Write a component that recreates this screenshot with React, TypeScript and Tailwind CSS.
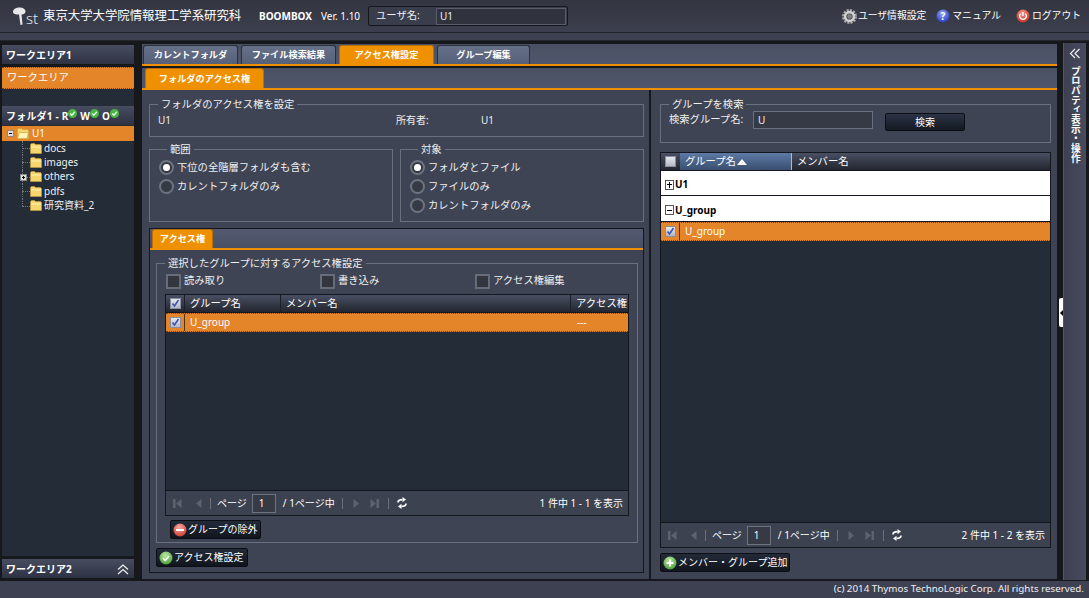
import React from "react";

function Orb({ from, to, children }: { from: string; to: string; children?: React.ReactNode }) {
	const id = from.slice(1) + to.slice(1);
	return (
		<svg width="14" height="14" viewBox="0 0 14 14" className="shrink-0">
			<defs>
				<radialGradient id={id} cx="45%" cy="30%" r="75%">
					<stop offset="0%" stopColor={from} />
					<stop offset="100%" stopColor={to} />
				</radialGradient>
			</defs>
			<circle cx="7" cy="7" r="6.5" fill={`url(#${id})`} />
			{children}
		</svg>
	);
}

function Gear() {
	return (
		<svg width="15" height="15" viewBox="0 0 15 15" className="shrink-0">
			<circle cx="7.5" cy="7.5" r="6" fill="none" stroke="#a8a8a8" strokeWidth="3" strokeDasharray="2 1.1" />
			<circle cx="7.5" cy="7.5" r="4.4" fill="none" stroke="#d0d0d0" strokeWidth="2.6" />
			<circle cx="7.5" cy="7.5" r="2.4" fill="#808080" />
		</svg>
	);
}

function MiniCheck() {
	return (
		<svg width="9" height="9" viewBox="0 0 9 9" className="inline-block align-[2px]">
			<circle cx="4.5" cy="4.5" r="4.5" fill="#4bb543" />
			<path d="M2.2 4.5l1.7 1.7 3-3.4" fill="none" stroke="#e8ffe8" strokeWidth="1.3" />
		</svg>
	);
}

function Folder({ open = false }: { open?: boolean }) {
	return (
		<svg width="12" height="11" viewBox="0 0 12 11" className="shrink-0">
			<path d="M0.5 2.5V1.5L1.5 0.5H4.5L5.5 1.5H10.5L11.5 2.5V10.5H0.5Z" fill="#f5d56e" stroke="#c9a03a" strokeWidth="0.6" />
			{open ? <path d="M0.5 10.5L2.5 4.5H11.5L10 10.5Z" fill="#fff3b8" stroke="#c9a03a" strokeWidth="0.6" /> : <path d="M1 3.5H11V4.5H1Z" fill="#fff3b8" />}
		</svg>
	);
}

function Expander({ minus = false, light = false }: { minus?: boolean; light?: boolean }) {
	return (
		<span
			className={`shrink-0 flex items-center justify-center relative border ${
				light ? "w-[9px] h-[10px] border-[#555] bg-white" : "w-[7px] h-[7px] border-[#888] bg-[#ddd]"
			}`}
		>
			<span className={`${light ? "w-[5px]" : "w-[3px]"} h-px bg-black`} />
			{minus ? null : <span className={`absolute w-px ${light ? "h-[6px]" : "h-[3px]"} bg-black`} />}
		</span>
	);
}

function Radio({ on = false, label }: { on?: boolean; label: string }) {
	return (
		<div className="flex items-center h-[19px]">
			<span className="w-[15px] h-[15px] rounded-full border-2 border-[#6e7480] bg-[#363a45] flex items-center justify-center shrink-0">
				{on ? <span className="w-[7px] h-[7px] rounded-full bg-white" /> : null}
			</span>
			<span className="ml-[3px] text-[10.3px] text-[#f0f0f0]">{label}</span>
		</div>
	);
}

function EmptyBox({ label, width }: { label: string; width: string }) {
	return (
		<div className={`flex items-center ${width}`}>
			<span className="w-[15px] h-[15px] border-2 border-[#666c78] bg-[#33363f] shrink-0" />
			<span className="ml-[3px] text-[10.3px] text-[#f0f0f0]">{label}</span>
		</div>
	);
}

function SmallCheck({ checked = true }: { checked?: boolean }) {
	return (
		<span className="w-[11px] h-[11px] bg-gradient-to-b from-[#e8e8ee] to-[#b4b8c4] border border-[#8a8fa0] flex items-center justify-center shrink-0">
			{checked ? (
				<svg width="9" height="9" viewBox="0 0 9 9">
					<path d="M1.5 4.5L3.5 7L7.5 1" fill="none" stroke="#3f52b5" strokeWidth="1.6" />
				</svg>
			) : null}
		</span>
	);
}

function Fieldset({ title, className, children }: { title: string; className: string; children?: React.ReactNode }) {
	return (
		<fieldset className={`border border-[#697080] ${className}`}>
			<legend className="ml-[8px] px-[3px] text-[10.3px] leading-[14px] text-[#f0f0f0]">{title}</legend>
			{children}
		</fieldset>
	);
}

function Tab({ label, active = false, width = "w-[95px]" }: { label: string; active?: boolean; width?: string }) {
	return (
		<div
			className={`h-[19px] ${width} rounded-t-[3px] border border-b-0 flex items-center justify-center text-[9.2px] font-bold text-white whitespace-nowrap ${
				active ? "bg-[#ee9000] border-[#b87008]" : "bg-gradient-to-b from-[#667088] to-[#566078] border-[#2b2f3a]"
			}`}
		>
			{label}
		</div>
	);
}

function PagerBtn({ flip = false, bar = false }: { flip?: boolean; bar?: boolean }) {
	return (
		<svg width="11" height="11" viewBox="0 0 11 11" className={`shrink-0 ${flip ? "-scale-x-100" : ""}`}>
			{bar ? <rect x="1" y="1" width="2.5" height="9" fill="#5c626e" /> : null}
			<path d="M9.5 1V10L4 5.5Z" fill="#5c626e" />
		</svg>
	);
}

function SyncIcon() {
	return (
		<svg width="10" height="12" viewBox="0 0 10 12" className="shrink-0">
			<path d="M1 5.5C1 3.4 2.6 2.6 5.5 2.6" fill="none" stroke="#fff" strokeWidth="1.7" />
			<path d="M5.5 0L9 2.6L5.5 5.2Z" fill="#fff" />
			<path d="M9 6.5C9 8.6 7.4 9.4 4.5 9.4" fill="none" stroke="#fff" strokeWidth="1.7" />
			<path d="M4.5 12L1 9.4L4.5 6.8Z" fill="#fff" />
		</svg>
	);
}

function Pager({ summary }: { summary: string }) {
	return (
		<div className="h-[25px] shrink-0 border-t border-[#14181e] bg-[#3d4250] flex items-center text-[10px] text-white whitespace-nowrap">
			<span className="ml-[6px]"><PagerBtn bar /></span>
			<span className="ml-[9px]"><PagerBtn /></span>
			<span className="ml-[7px] w-px h-[11px] bg-[#6a707c]" />
			<span className="ml-[6px]">ページ</span>
			<span className="ml-[5px] w-[24px] h-[19px] border border-[#6e7480] bg-[#363a45] flex items-center pl-[6px]">1</span>
			<span className="ml-[7px]">/ 1ページ中</span>
			<span className="ml-[7px] w-px h-[11px] bg-[#6a707c]" />
			<span className="ml-[9px]"><PagerBtn flip /></span>
			<span className="ml-[6px]"><PagerBtn flip bar /></span>
			<span className="ml-[8px] w-px h-[11px] bg-[#6a707c]" />
			<span className="ml-[8px]"><SyncIcon /></span>
			<span className="ml-auto mr-[5px]">{summary}</span>
		</div>
	);
}

function DarkButton({ icon, label, className }: { icon: React.ReactNode; label: string; className: string }) {
	return (
		<div className={`h-[19px] rounded-[2px] border border-[#0b0e14] bg-gradient-to-b from-[#232a38] to-[#11151d] flex items-center pl-[2px] text-[10px] text-white ${className}`}>
			{icon}
			<span className="ml-[1px] whitespace-nowrap">{label}</span>
		</div>
	);
}

const HeadCell = "h-full flex items-center border-r border-[#1b1f28] pl-[5px]";

function AccessGrid() {
	return (
		<div className="mx-[8px] mt-[5px] h-[222px] w-[464px] border border-[#14181e] bg-[#232c37] flex flex-col">
			<div className="h-[18px] shrink-0 bg-gradient-to-b from-[#4a5064] to-[#23262f] flex items-center text-[10.3px] text-white border-b border-[#14181e]">
				<div className={`${HeadCell} w-[19px] justify-center !pl-0`}><SmallCheck /></div>
				<div className={`${HeadCell} w-[96px]`}>グループ名</div>
				<div className={`${HeadCell} w-[290px]`}>メンバー名</div>
				<div className="pl-[5px] overflow-hidden whitespace-nowrap w-[57px]">アクセス権</div>
			</div>
			<div className="h-[19px] shrink-0 bg-[#e38528] border-y border-dotted border-[#7a4408] flex items-center text-[10px] text-white">
				<div className="w-[19px] flex justify-center border-r border-[#50330f] h-full items-center"><SmallCheck /></div>
				<div className="pl-[5px] w-[392px]">U_group</div>
				<div>---</div>
			</div>
			<div className="flex-1" />
			<Pager summary="1 件中 1 - 1 を表示" />
		</div>
	);
}

function LeftPane() {
	return (
		<div className="w-[508px] shrink-0 border-r border-[#14181e] pl-[7px] pt-[7px]">
			<Fieldset title="フォルダのアクセス権を設定" className="h-[40px] w-[495px]">
				<div className="flex text-[10px] text-[#f0f0f0] h-[16px] items-center mt-[1px]">
					<span className="ml-[8px] w-[238px]">U1</span>
					<span className="w-[85px]">所有者:</span>
					<span>U1</span>
				</div>
			</Fieldset>
			<div className="flex gap-[7px] mt-[5px]">
				<Fieldset title="範囲" className="h-[80px] w-[244px] pl-[9px]">
					<div className="pt-[2px]">
						<Radio on label="下位の全階層フォルダも含む" />
						<Radio label="カレントフォルダのみ" />
					</div>
				</Fieldset>
				<Fieldset title="対象" className="h-[80px] w-[244px] pl-[9px]">
					<div className="pt-[2px]">
						<Radio on label="フォルダとファイル" />
						<Radio label="ファイルのみ" />
						<Radio label="カレントフォルダのみ" />
					</div>
				</Fieldset>
			</div>
			<div className="mt-[6px] w-[495px] h-[345px] border border-[#14181e] flex flex-col">
				<div className="h-[21px] shrink-0 bg-gradient-to-b from-[#535a70] to-[#4a5064] pl-[2px] border-b-2 border-[#ee9000]">
					<Tab label="アクセス権" active width="w-[61px]" />
				</div>
				<div className="px-[6px] pt-[6px]">
					<Fieldset title="選択したグループに対するアクセス権設定" className="h-[287px] w-[482px]">
						<div className="flex pl-[9px] h-[16px] items-center mt-[3px]">
							<EmptyBox label="読み取り" width="w-[154px]" />
							<EmptyBox label="書き込み" width="w-[155px]" />
							<EmptyBox label="アクセス権編集" width="" />
						</div>
						<AccessGrid />
						<DarkButton
							className="mt-[4px] ml-[13px] w-[91px]"
							icon={<Orb from="#f8a8a0" to="#c83a30"><rect x="3" y="6" width="8" height="2" fill="#fff" /></Orb>}
							label="グループの除外"
						/>
					</Fieldset>
					<DarkButton
						className="mt-[5px] w-[92px]"
						icon={<Orb from="#b8e8a0" to="#4a9a38"><path d="M4 7l2.2 2.4L10 5" fill="none" stroke="#fff" strokeWidth="1.5" /></Orb>}
						label="アクセス権設定"
					/>
				</div>
			</div>
		</div>
	);
}

function RightPane() {
	return (
		<div className="flex-1 min-w-0 pl-[9px] pt-[7px] border-l border-[#14181e]">
			<Fieldset title="グループを検索" className="h-[46px] w-[391px]">
				<div className="flex items-center h-[18px] text-[10.3px] text-[#f0f0f0] pl-[8px]">
					<span className="w-[84px] whitespace-nowrap">検索グループ名:</span>
					<span className="w-[120px] h-[18px] border border-[#697080] bg-[#363a45] flex items-center pl-[4px] text-[10px]">U</span>
					<span className="ml-[12px] w-[80px] h-[18px] self-start mt-[2px] rounded-[2px] border border-[#0b0e14] bg-gradient-to-b from-[#2b3346] to-[#141923] flex items-center justify-center text-white text-[10px]">検索</span>
				</div>
			</Fieldset>
			<div className="mt-[9px] w-[391px] h-[396px] border border-[#14181e] bg-[#232c37] flex flex-col">
				<div className="h-[18px] shrink-0 bg-gradient-to-b from-[#4a5064] to-[#23262f] flex items-center text-[10.3px] text-white border-b border-[#14181e]">
					<div className="w-[19px] h-full flex items-center justify-center"><SmallCheck checked={false} /></div>
					<div className="w-[112px] h-full flex items-center pl-[5px] border-r border-[#a8bcd8] bg-gradient-to-b from-[#5d7aa6] to-[#3a4f70]">
						グループ名
						<span className="ml-[1px] w-0 h-0 border-x-[5px] border-x-transparent border-b-[6px] border-b-white" />
					</div>
					<div className="pl-[5px]">メンバー名</div>
				</div>
				<div className="h-[25px] shrink-0 bg-white border-b border-[#14181e] flex items-center pl-[4px] pt-[3px] text-[10px] font-bold text-black gap-[1px]">
					<Expander light />U1
				</div>
				<div className="h-[26px] shrink-0 bg-white border-b border-[#14181e] flex items-center pl-[4px] pt-[3px] text-[10px] font-bold text-black gap-[1px]">
					<Expander minus light />U_group
				</div>
				<div className="h-[19px] shrink-0 bg-[#e38528] border-y border-dotted border-[#7a4408] flex items-center text-[10px] text-white">
					<div className="w-[19px] flex justify-center border-r border-[#50330f] h-full items-center"><SmallCheck /></div>
					<div className="pl-[5px]">U_group</div>
				</div>
				<div className="flex-1" />
				<Pager summary="2 件中 1 - 2 を表示" />
			</div>
			<DarkButton
				className="mt-[5px] w-[130px]"
				icon={<Orb from="#b8e8a0" to="#4a9a38"><path d="M7 3.5v7M3.5 7h7" stroke="#fff" strokeWidth="2" /></Orb>}
				label="メンバー・グループ追加"
			/>
		</div>
	);
}

function TreeRow({ label, plus = false, last = false }: { label: string; plus?: boolean; last?: boolean }) {
	return (
		<div className="h-[14.4px] flex items-center relative pl-[28px] text-[10px] text-[#eef0f4]">
			<span className={`absolute left-[20px] top-0 w-px border-l border-dotted border-[#777] ${last ? "h-[7px]" : "h-full"}`} />
			<span className="absolute left-[20px] top-[7px] w-[8px] border-t border-dotted border-[#777]" />
			{plus ? <span className="absolute left-[18px] top-[4px]"><Expander /></span> : null}
			<Folder />
			<span className="ml-[2px] whitespace-nowrap">{label}</span>
		</div>
	);
}

function SideHead({ children, className = "" }: { children: React.ReactNode; className?: string }) {
	return (
		<div className={`h-[19px] shrink-0 bg-gradient-to-b from-[#474c60] to-[#2e3243] flex items-center pl-[4px] pt-[2px] text-[10px] font-bold text-white ${className}`}>
			{children}
		</div>
	);
}

function Sidebar() {
	return (
		<aside className="w-[132px] ml-[2px] mt-[2px] mb-[2px] shrink-0 flex flex-col">
			<SideHead>ワークエリア1</SideHead>
			<div className="mt-[3px] h-[22px] shrink-0 bg-[#e38528] border-y border-dotted border-[#7a4408] flex items-center pl-[5px] text-[10.3px] text-white">ワークエリア</div>
			<div className="h-[17px] shrink-0 bg-[#232c37]" />
			<SideHead>
				<span className="whitespace-nowrap tracking-[0.2px]">フォルダ1 - R<MiniCheck /> W<MiniCheck /> O<MiniCheck /></span>
			</SideHead>
			<div className="flex-1 bg-[#232c37] pt-px">
				<div className="h-[15px] bg-[#e38528] flex items-center pl-[5px] text-[10px] text-white gap-[3px]">
					<Expander minus />
					<Folder open />
					<span>U1</span>
				</div>
				<TreeRow label="docs" />
				<TreeRow label="images" />
				<TreeRow label="others" plus />
				<TreeRow label="pdfs" />
				<TreeRow label="研究資料_2" last />
			</div>
			<SideHead className="mt-[3px] justify-between pr-[5px]">
				ワークエリア2
				<svg width="12" height="11" viewBox="0 0 12 11">
					<path d="M1 5.5L6 1l5 4.5M1 10L6 5.5 11 10" fill="none" stroke="#eee" strokeWidth="1.3" />
				</svg>
			</SideHead>
		</aside>
	);
}

export default function App() {
	return (
		<div
			className="relative w-[1089px] h-[598px] overflow-hidden flex flex-col bg-[#17181c]"
			style={{ fontFamily: '"Noto Sans", "Noto Sans CJK JP", sans-serif' }}
		>
			<header className="h-[41px] shrink-0 bg-gradient-to-b from-[#33353f] to-[#3e4152] border-b border-[#24262e]">
				<div className="h-[33px] border-b border-[#23252e] flex items-center">
					<svg width="15" height="20" viewBox="0 0 15 20" className="ml-[12px] shrink-0">
						<path d="M1 6C1 3 4 1.5 7.5 1.5C11 1.5 14 3.5 13.5 6C13 8 10.5 8.5 9.5 8.5L10.5 18.5L8.5 19L7 8.5C4 8.5 1 8 1 6Z" fill="#e8e8ea" />
					</svg>
					<span className="text-[15px] leading-none font-light text-[#e8e8ea] w-[17px] pt-[4px] -ml-[1px]">st</span>
					<span className="text-[12.4px] text-white w-[216px] whitespace-nowrap">東京大学大学院情報理工学系研究科</span>
					<span className="text-[10px] font-bold text-white w-[62px]">BOOMBOX</span>
					<span className="text-[10px] text-white w-[47px]">Ver. 1.10</span>
					<div className="w-[200px] h-[20px] rounded-[2px] border border-[#15171c] bg-[#3a3d4c] flex items-center text-[10.3px] text-[#f0f0f0]">
						<span className="ml-[7px] w-[60px]">ユーザ名:</span>
						<span className="flex-1 h-[17px] mr-px border border-[#5a5e6a] bg-[#30333d] pl-[3px] flex items-center text-[10px]">U1</span>
					</div>
					<div className="ml-auto mr-[8px] flex items-center text-[9.8px] text-white whitespace-nowrap">
						<Gear />
						<span className="ml-[1px]">ユーザ情報設定</span>
						<span className="ml-[10px]">
							<Orb from="#8fa6ff" to="#2536b8">
								<text x="7" y="10.5" textAnchor="middle" fontSize="10" fontWeight="bold" fill="#fff">?</text>
							</Orb>
						</span>
						<span className="ml-[2px]">マニュアル</span>
						<span className="ml-[15px]">
							<Orb from="#f59a8a" to="#c02a20">
								<path d="M4.6 4.6a3.4 3.4 0 1 0 4.8 0M7 3v4" fill="none" stroke="#fff" strokeWidth="1.3" />
							</Orb>
						</span>
						<span className="ml-[2px]">ログアウト</span>
					</div>
				</div>
			</header>
			<div className="flex-1 min-h-0 flex pt-[2px] pb-px">
				<Sidebar />
				<main className="ml-[7px] w-[917px] shrink-0 bg-[#3e4454] border border-[#14181e] flex flex-col">
					<div className="h-[22px] shrink-0 bg-gradient-to-b from-[#4a5064] to-[#4f566b] border-b-2 border-[#ee9000] pl-[1px] flex gap-[3px] items-end">
						<Tab label="カレントフォルダ" />
						<Tab label="ファイル検索結果" />
						<Tab label="アクセス権設定" active />
						<Tab label="グループ編集" width="w-[93px]" />
					</div>
					<div className="h-[24px] shrink-0 bg-gradient-to-b from-[#4a5064] to-[#4f566b] border-b-2 border-[#ee9000] border-t-2 border-t-[#14181e] pl-[3px] flex items-end">
						<Tab label="フォルダのアクセス権" active width="w-[119px] !h-[20px]" />
					</div>
					<div className="flex-1 min-h-0 flex">
						<LeftPane />
						<RightPane />
					</div>
				</main>
				<div className="ml-[5px] w-[23px] shrink-0 bg-gradient-to-r from-[#3c4050] to-[#474b5e] border-l border-[#50566c] flex flex-col items-center pt-[5px]">
					<svg width="12" height="11" viewBox="0 0 12 11">
						<path d="M6 1L1.5 5.5 6 10M10.5 1L6 5.5 10.5 10" fill="none" stroke="#eee" strokeWidth="1.2" />
					</svg>
					<span className="mt-[7px] -ml-px [writing-mode:vertical-rl] text-[9.7px] font-bold text-white whitespace-nowrap">プロパティ表示・操作</span>
				</div>
				<span className="absolute left-[1059px] top-[298px] w-[4px] h-[29px] bg-white rounded-l-[2px] flex items-center justify-center">
					<span className="w-0 h-0 border-y-[3px] border-y-transparent border-r-[3px] border-r-black" />
				</span>
			</div>
			<footer className="h-[17px] shrink-0 bg-[#3e4152] flex items-center justify-end pr-[5px] text-[9.8px] text-[#eef0f4]">
				(c) 2014 Thymos TechnoLogic Corp. All rights reserved.
			</footer>
		</div>
	);
}
